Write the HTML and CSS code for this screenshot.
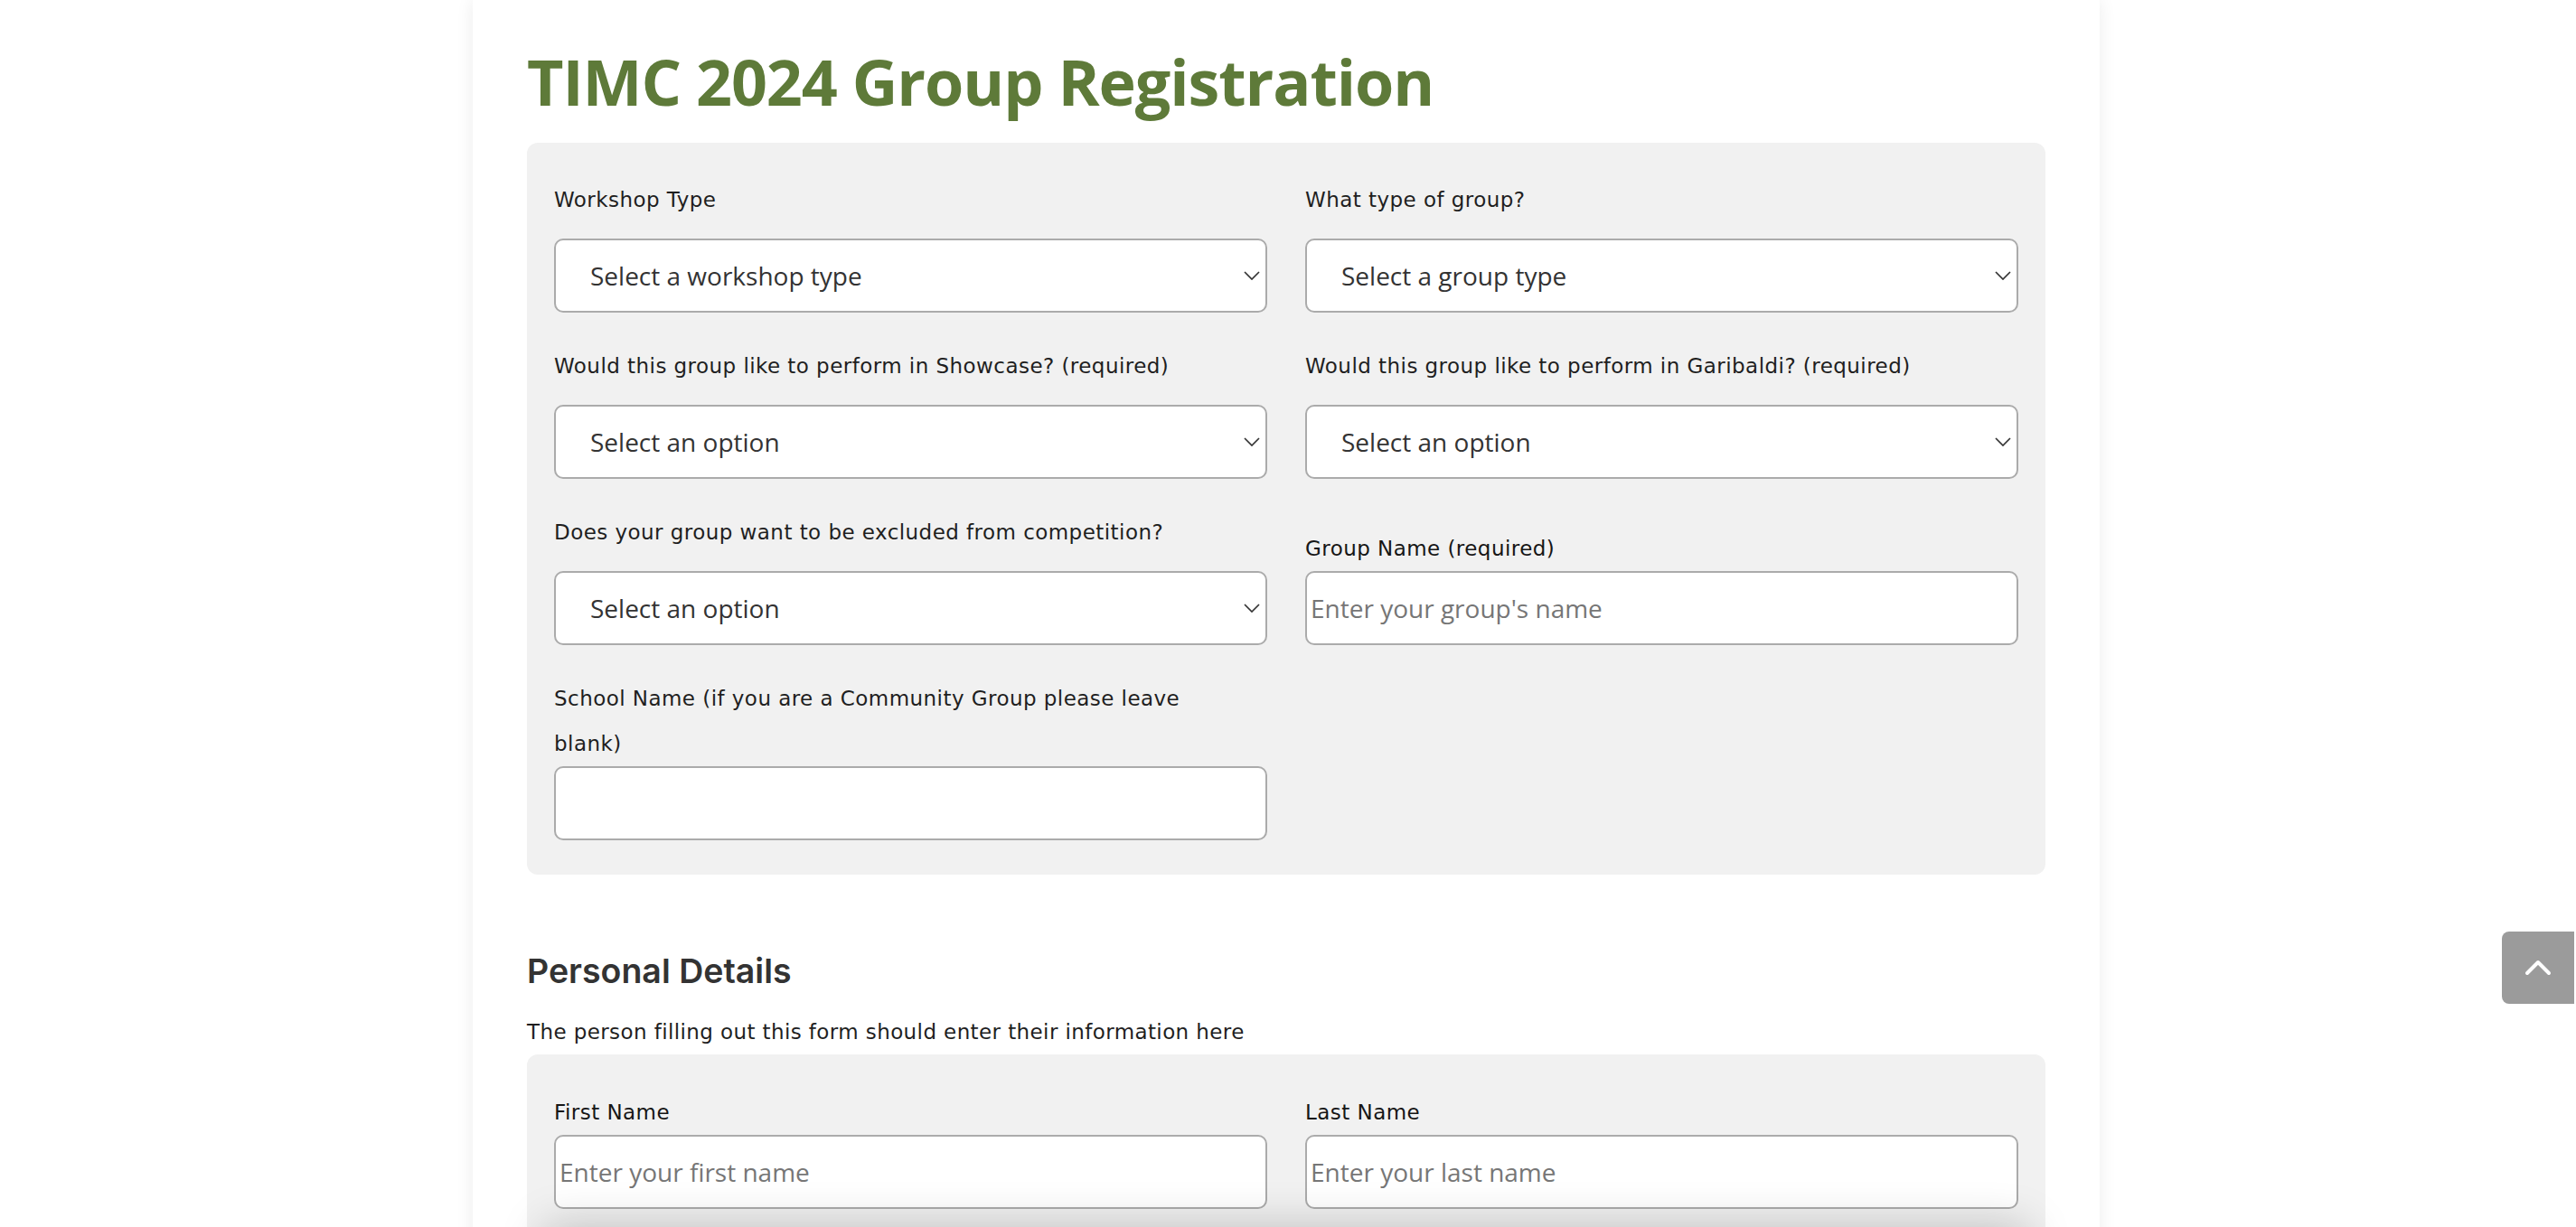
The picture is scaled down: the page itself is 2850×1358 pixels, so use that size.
FILE: index.html
```html
<!DOCTYPE html>
<html lang="en">
<head>
<meta charset="utf-8">
<title>TIMC 2024 Group Registration</title>
<link rel="stylesheet" href="styles.css">
</head>
<body>
<main class="card">
  <h1 class="title">TIMC 2024 Group Registration</h1>

  <section class="panel">
    <div class="grid">
      <div class="field field-select">
        <label class="label" for="workshop">Workshop Type</label>
        <div class="select-wrap">
          <select id="workshop" class="select"><option>Select a workshop type</option></select>
          <svg class="chev" viewBox="0 0 18 10"><polyline points="1,1 9,9 17,1"/></svg>
        </div>
      </div>
      <div class="field field-select">
        <label class="label" for="gtype">What type of group?</label>
        <div class="select-wrap">
          <select id="gtype" class="select"><option>Select a group type</option></select>
          <svg class="chev" viewBox="0 0 18 10"><polyline points="1,1 9,9 17,1"/></svg>
        </div>
      </div>
      <div class="field field-select">
        <label class="label" for="showcase">Would this group like to perform in Showcase? (required)</label>
        <div class="select-wrap">
          <select id="showcase" class="select"><option>Select an option</option></select>
          <svg class="chev" viewBox="0 0 18 10"><polyline points="1,1 9,9 17,1"/></svg>
        </div>
      </div>
      <div class="field field-select">
        <label class="label" for="garibaldi">Would this group like to perform in Garibaldi? (required)</label>
        <div class="select-wrap">
          <select id="garibaldi" class="select"><option>Select an option</option></select>
          <svg class="chev" viewBox="0 0 18 10"><polyline points="1,1 9,9 17,1"/></svg>
        </div>
      </div>
      <div class="field field-select">
        <label class="label" for="exclude">Does your group want to be excluded from competition?</label>
        <div class="select-wrap">
          <select id="exclude" class="select"><option>Select an option</option></select>
          <svg class="chev" viewBox="0 0 18 10"><polyline points="1,1 9,9 17,1"/></svg>
        </div>
      </div>
      <div class="field">
        <label class="label label-strong" for="gname">Group Name (required)</label>
        <input id="gname" class="input" type="text" placeholder="Enter your group's name">
      </div>
      <div class="field">
        <label class="label" for="school">School Name (if you are a Community Group please leave<br>blank)</label>
        <input id="school" class="input" type="text">
      </div>
    </div>
  </section>

  <h2 class="section-title">Personal Details</h2>
  <p class="section-sub">The person filling out this form should enter their information here</p>

  <section class="panel panel-personal">
    <div class="grid">
      <div class="field">
        <label class="label label-strong" for="fname">First Name</label>
        <input id="fname" class="input" type="text" placeholder="Enter your first name">
      </div>
      <div class="field">
        <label class="label label-strong" for="lname">Last Name</label>
        <input id="lname" class="input" type="text" placeholder="Enter your last name">
      </div>
    </div>
  </section>
</main>

<a class="to-top" href="#" aria-label="Back to top">
  <svg viewBox="0 0 30 18"><polyline points="3,15 15,3 27,15"/></svg>
</a>
<div class="bottom-shade"></div>
</body>
</html>
```

FILE: styles.css
```css
* { box-sizing: border-box; }

body {
  margin: 0;
  padding-right: 4px;
  background: #ffffff;
}

.card {
  width: 1800px;
  margin: 0 auto;
  padding: 41px 60px 240px;
  background: #ffffff;
  box-shadow: 0 0 18px rgba(0, 0, 0, 0.08);
}

.title {
  margin: 0 0 19px;
  font: 700 70px/98px "Open Sans", sans-serif;
  letter-spacing: -1.1px;
  color: #5e7a39;
}

.panel {
  background: #f1f1f1;
  border-radius: 12px;
  padding: 38px 30px;
}

.panel-personal {
  padding-top: 39px;
}

.grid {
  display: grid;
  grid-template-columns: 1fr 1fr;
  column-gap: 42px;
  row-gap: 34px;
  align-items: end;
}

.field {
  display: flex;
  flex-direction: column;
}

.label {
  display: block;
  font: 400 23px/50px "DejaVu Sans", sans-serif;
  letter-spacing: 0.45px;
  color: #1f1f1f;
}

.label-strong {
  color: #161616;
}

.field-select .label {
  margin-bottom: 18px;
}

.select-wrap {
  position: relative;
}

.select,
.input {
  display: block;
  width: 100%;
  height: 82px;
  margin: 0;
  border: 2px solid #ababab;
  border-radius: 10px;
  background: #ffffff;
  font: 400 28px "Open Sans", sans-serif;
  color: #333333;
  outline: none;
}

.select {
  appearance: none;
  -webkit-appearance: none;
  padding: 0 40px 0 38px;
}

.input {
  padding: 0 4px;
}

.input::placeholder {
  color: #767676;
  opacity: 1;
}

.chev {
  position: absolute;
  right: 8px;
  top: 50%;
  width: 18px;
  height: 10px;
  margin-top: -5px;
  pointer-events: none;
  fill: none;
  stroke: #333333;
  stroke-width: 1.7;
}

.section-title {
  margin: 80px 0 25px;
  font: 600 37.5px/54px "Inter", sans-serif;
  color: #333333;
}

.section-sub {
  margin: 0 0 10px;
  font: 400 23px/30px "DejaVu Sans", sans-serif;
  letter-spacing: 0.4px;
  color: #1f1f1f;
}

.to-top {
  position: fixed;
  right: 2px;
  bottom: 247px;
  width: 80px;
  height: 80px;
  background: #9b9b9b;
  border-radius: 8px 0 0 8px;
  display: flex;
  align-items: center;
  justify-content: center;
}

.to-top svg {
  width: 30px;
  height: 18px;
  fill: none;
  stroke: #ffffff;
  stroke-width: 4;
  stroke-linecap: round;
  stroke-linejoin: round;
}

.bottom-shade {
  position: fixed;
  left: 50%;
  top: 100%;
  width: 1640px;
  height: 60px;
  margin-left: -822px;
  background: #ffffff;
  box-shadow: 0 0 50px rgba(0, 0, 0, 0.22);
}
```
